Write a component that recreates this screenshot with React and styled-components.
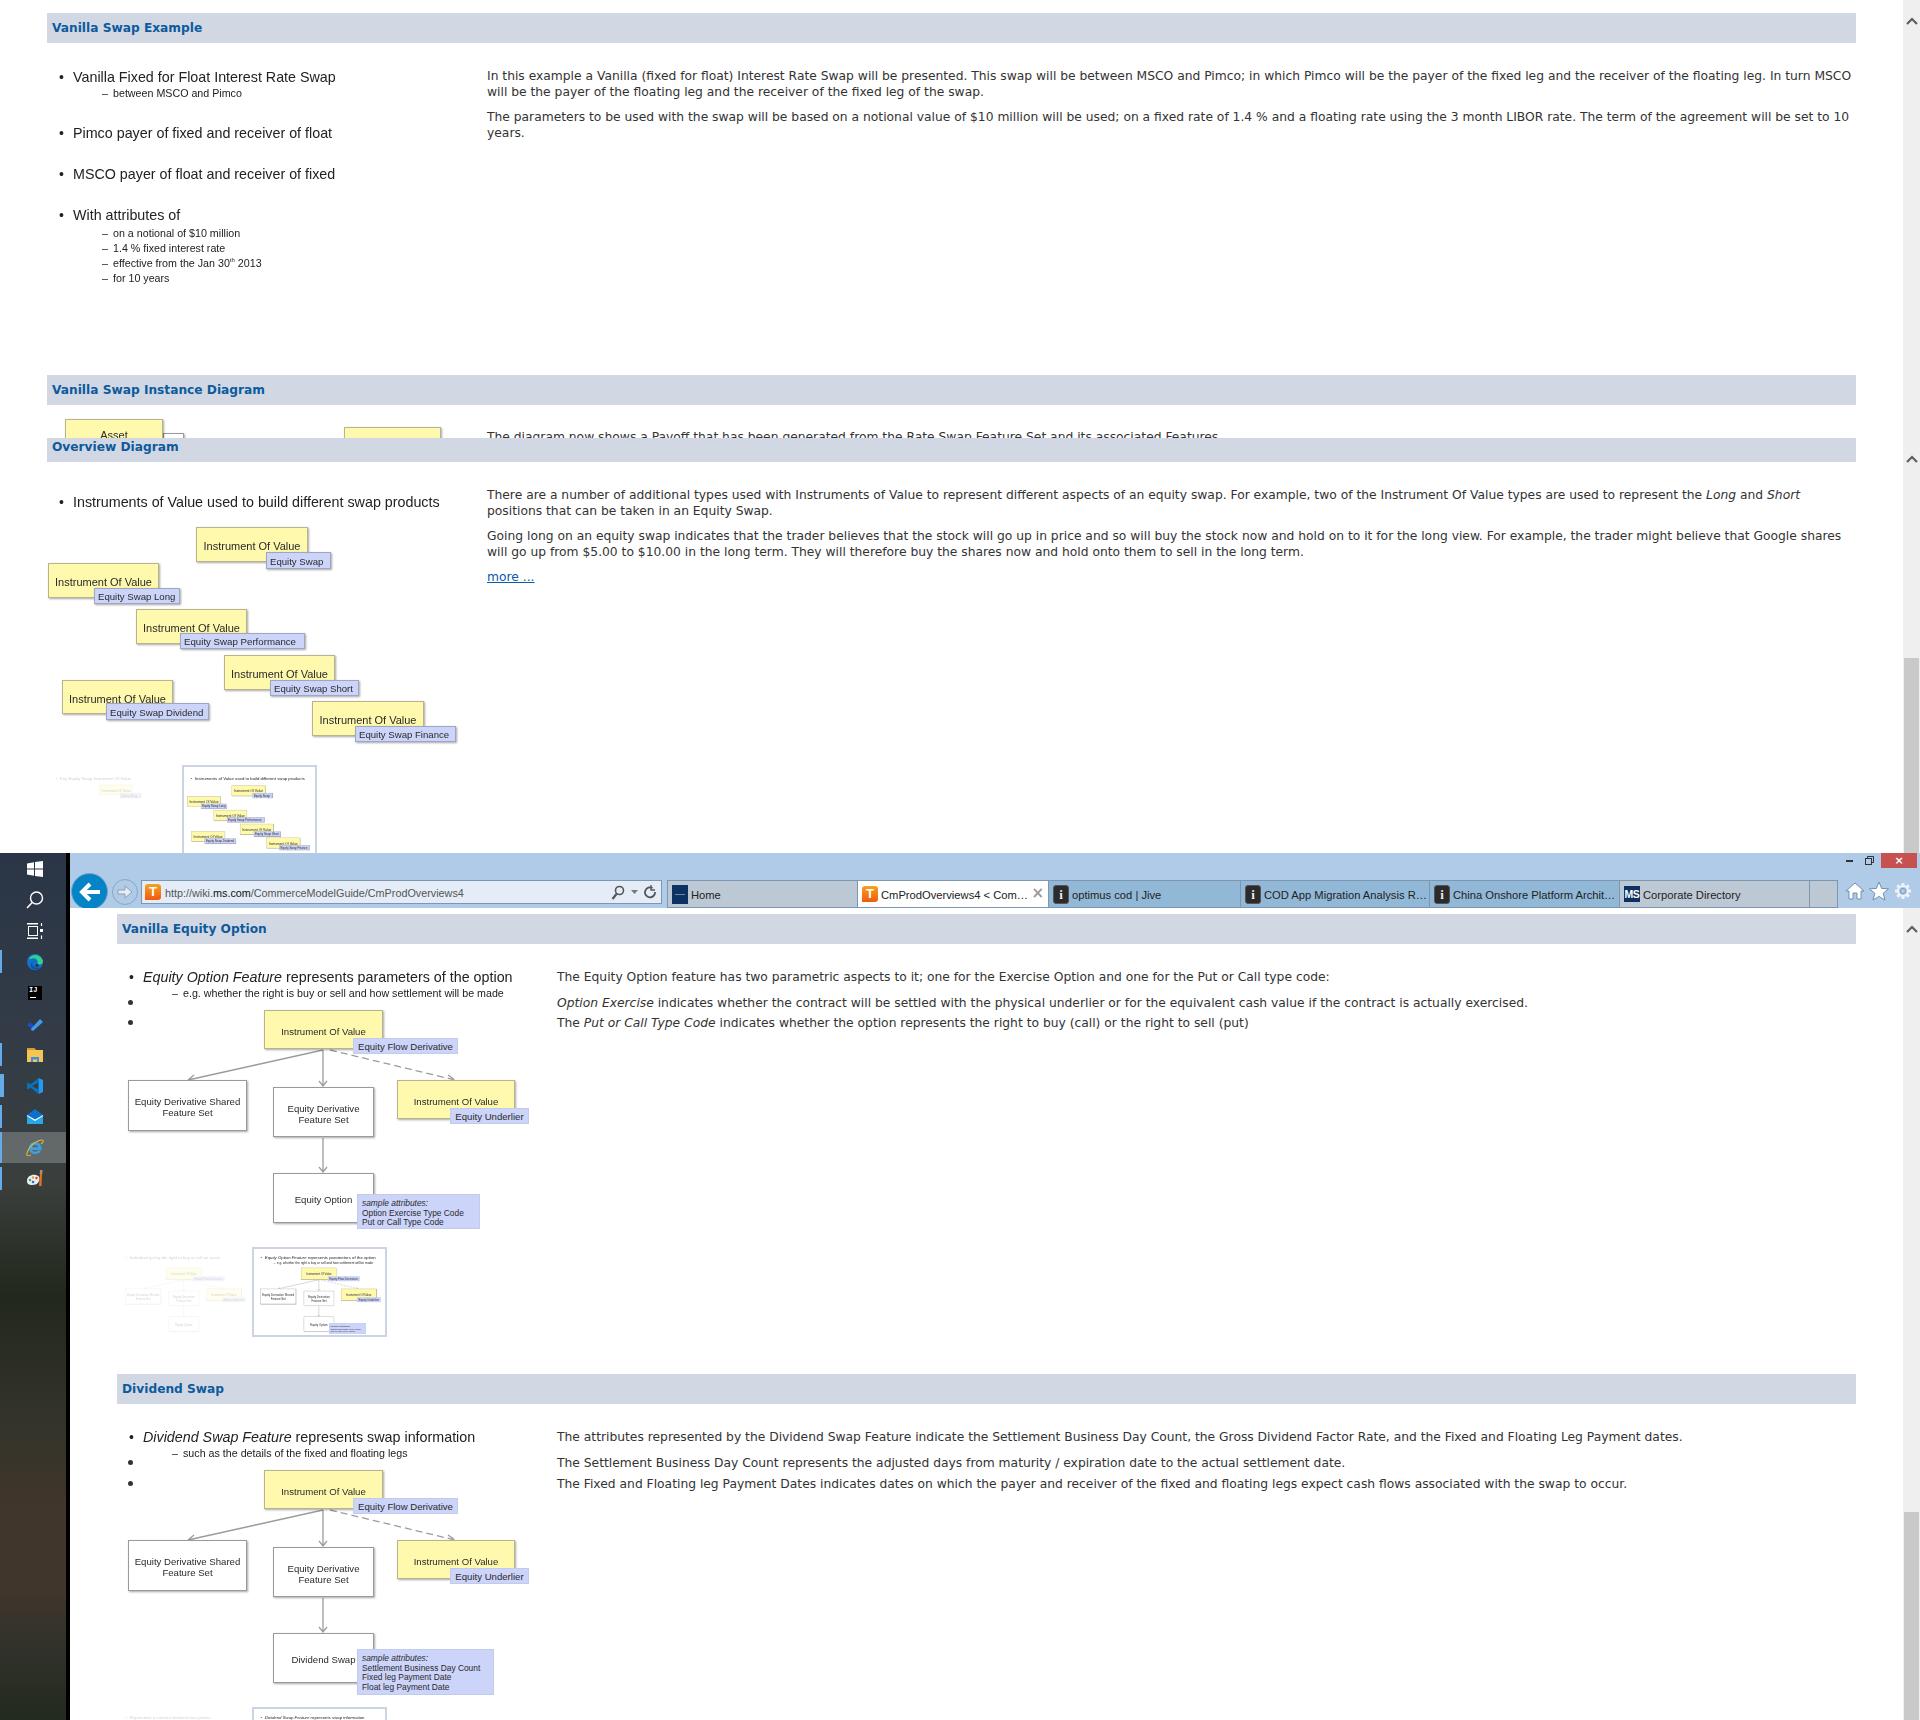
import React from "react";
import styled, { createGlobalStyle } from "styled-components";

const Global = createGlobalStyle`
  html, body { margin: 0; padding: 0; background: #fff; }
  * { box-sizing: border-box; }
`;

const Root = styled.div`
  width: 1920px;
  height: 1720px;
  display: flex;
  flex-direction: column;
  overflow: hidden;
  background: #fff;
`;
const Pane = styled.div`
  height: ${(p) => p.$h}px;
  display: flex;
  flex: none;
  overflow: hidden;
`;
const PaneBody = styled.div`
  flex: 1;
  min-width: 0;
  padding: ${(p) => p.$top || 0}px 47px 0;
  overflow: hidden;
`;
const ScrollTrack = styled.div`
  width: 17px;
  flex: none;
  display: flex;
  flex-direction: column;
  align-items: center;
  background: #efefef;
  padding-top: 17px;
  svg { flex: none; }
`;
const ScrollThumb = styled.div`
  margin-top: auto;
  width: 15px;
  height: ${(p) => p.$h}px;
  background: #c9c9c9;
`;
const SectionHeader = styled.h2`
  margin: 0;
  height: ${(p) => p.$h || 30}px;
  padding: 0 5px ${(p) => (p.$pb === undefined ? 1 : p.$pb)}px;
  display: flex;
  align-items: center;
  background: #d1d8e3;
  color: #0d5a9d;
  font: bold 12.2px "DejaVu Sans", Verdana, sans-serif;
`;
const SectionBody = styled.div`
  display: grid;
  grid-template-columns: 440px 1fr;
  height: ${(p) => p.$h}px;
  overflow: hidden;
`;
const SlideColumn = styled.div`
  display: flex;
  flex-direction: column;
  min-width: 0;
`;
const TextColumn = styled.div`
  padding-top: ${(p) => p.$top || 25}px;
  font: 12.3px/16px "DejaVu Sans", Verdana, sans-serif;
  color: #333;
`;
const Para = styled.p`
  margin: 0 0 ${(p) => (p.$gap === undefined ? 9 : p.$gap)}px;
`;
const MoreLink = styled.a`
  color: #0a5ca8;
  text-decoration: underline;
`;

/* slide */
const SlideCanvas = styled.div`
  position: relative;
  width: 440px;
  height: ${(p) => p.$h}px;
  padding-top: ${(p) => p.$top}px;
  flex: none;
  filter: blur(0.3px);
  font-family: "Liberation Sans", Arial, sans-serif;
  color: #222;
`;
const BulletList = styled.ul`
  margin: 0;
  padding: 0 0 0 26px;
  list-style: none;
`;
const Bullet = styled.li`
  position: relative;
  font-size: 14.3px;
  line-height: 18px;
  margin-top: ${(p) => p.$mt || 0}px;
  white-space: nowrap;
  &::before {
    content: "•";
    position: absolute;
    left: -14px;
    font-size: 14px;
  }
`;
const SubList = styled.ul`
  margin: 0;
  padding: 0 0 0 40px;
  list-style: none;
  margin-top: ${(p) => p.$mt || 0}px;
`;
const SubItem = styled.li`
  position: relative;
  font-size: 10.7px;
  line-height: 15px;
  white-space: nowrap;
  &::before {
    content: "–";
    position: absolute;
    left: -11px;
  }
  sup { font-size: 6px; line-height: 0; }
`;
const nodeBg = { yellow: "#fff9ad", white: "#fff", blue: "#ccd4fa", flat: "#ccd4fa" };
const nodeBorder = { yellow: "#b5b48c", white: "#9a9a9a", blue: "#9ea6c6", flat: "#c3cbea" };
const nodePadTop = { yellow: 4, white: 3, blue: 1, flat: 1 };
const Node = styled.div`
  position: absolute;
  left: ${(p) => p.$x}px;
  top: ${(p) => p.$y}px;
  width: ${(p) => p.$w}px;
  height: ${(p) => p.$h}px;
  display: flex;
  align-items: center;
  justify-content: ${(p) => (p.$kind === "blue" ? "flex-start" : "center")};
  text-align: center;
  padding-top: ${(p) => nodePadTop[p.$kind]}px;
  padding-left: ${(p) => (p.$kind === "blue" ? 3 : 0)}px;
  font-size: ${(p) => p.$fs || 9.6}px;
  line-height: 11px;
  white-space: nowrap;
  color: #2a2a2a;
  background: ${(p) => nodeBg[p.$kind]};
  border: 1px solid ${(p) => nodeBorder[p.$kind]};
  box-shadow: ${(p) => (p.$kind === "flat" ? "none" : "1px 1px 2px rgba(0, 0, 0, 0.35)")};
`;
const AttrNode = styled(Node)`
  display: block;
  text-align: left;
  padding: 4px 0 0 4px;
  line-height: 9.7px;
  font-size: 8.4px;
  em { display: block; }
`;
const Dot = styled.span`
  position: absolute;
  left: ${(p) => p.$x}px;
  top: ${(p) => p.$y}px;
  width: 5px;
  height: 5px;
  border-radius: 50%;
  background: #333;
`;
const Connectors = styled.svg`
  position: absolute;
  left: 0;
  top: 0;
  width: 440px;
  height: 300px;
  pointer-events: none;
`;
const ThumbRow = styled.div`
  display: flex;
  margin-top: ${(p) => p.$mt}px;
  flex: none;
`;
const ThumbFrame = styled.div`
  position: relative;
  width: 135px;
  height: 90px;
  overflow: hidden;
  flex: none;
  border: 2px solid ${(p) => (p.$active ? "#ccd3e2" : "transparent")};
  opacity: ${(p) => (p.$active ? 1 : 0.22)};
  background: #fff;
`;
const ThumbInner = styled.div`
  position: absolute;
  left: 3px;
  top: -1px;
  transform: scale(0.3);
  transform-origin: 0 0;
`;

/* taskbar */
const BottomRow = styled.div`
  flex: 1;
  display: flex;
  min-height: 0;
`;
const Taskbar = styled.div`
  width: 70px;
  flex: none;
  border-right: 4px solid #000;
  display: flex;
  flex-direction: column;
  background: linear-gradient(180deg, #2a3547 0%, #333c46 23%, #3a3f3d 38%, #22281b 51%, #33332a 65%, #41362b 76%, #40362c 85%, #30322a 92%, #232a1f 100%);
`;
const TaskItem = styled.div`
  height: 31px;
  display: flex;
  align-items: center;
  justify-content: center;
  position: relative;
  flex: none;
  padding-left: 4px;
  background: ${(p) => (p.$active ? "rgba(255,255,255,0.22)" : "transparent")};
  &::before {
    content: "";
    display: ${(p) => (p.$open ? "block" : "none")};
    position: absolute;
    left: 0;
    top: ${(p) => (p.$active ? 0 : 4)}px;
    bottom: ${(p) => (p.$active ? 0 : 4)}px;
    width: ${(p) => (p.$wide ? 4 : 2)}px;
    background: #63ace9;
  }
`;
const IJLogo = styled.div`
  width: 14px;
  height: 14px;
  background: #000;
  color: #fff;
  font: bold 7px/9px "Liberation Mono", monospace;
  padding-left: 1px;
  position: relative;
  &::after {
    content: "";
    position: absolute;
    left: 2px;
    bottom: 2px;
    width: 6px;
    height: 1px;
    background: #fff;
  }
`;

/* browser */
const Browser = styled.div`
  flex: 1;
  min-width: 0;
  display: flex;
  flex-direction: column;
`;
const Chrome = styled.div`
  height: 55px;
  flex: none;
  background: #afcbe7;
  overflow: hidden;
  display: flex;
  flex-direction: column;
`;
const TitleRow = styled.div`
  height: 27px;
  flex: none;
  display: flex;
  justify-content: flex-end;
  align-items: flex-start;
  padding-right: 3px;
`;
const WinBtn = styled.div`
  width: ${(p) => p.$w}px;
  height: 15px;
  margin-left: ${(p) => (p.$close ? 2 : 0)}px;
  display: flex;
  align-items: center;
  justify-content: center;
  background: ${(p) => (p.$close ? "#c75050" : "transparent")};
  color: #fff;
  font: bold 11px/1 "DejaVu Sans", sans-serif;
`;
const NavRow = styled.div`
  height: 28px;
  flex: none;
  display: flex;
  align-items: flex-start;
`;
const BackBtn = styled.div`
  width: 37px;
  height: 37px;
  margin: -7px 0 0 1px;
  border-radius: 50%;
  background: #0483c6;
  border: 1px solid #7aa4c8;
  flex: none;
  display: flex;
  align-items: center;
  justify-content: center;
`;
const ForwardBtn = styled.div`
  width: 26px;
  height: 26px;
  margin: -1px 3px 0 4px;
  border-radius: 50%;
  border: 1px solid #8ca6bf;
  flex: none;
  display: flex;
  align-items: center;
  justify-content: center;
`;
const AddressBar = styled.div`
  width: 521px;
  height: 24px;
  flex: none;
  display: flex;
  align-items: center;
  background: #e4edf7;
  border: 1px solid #7d97b0;
  padding: 0 4px 0 3px;
  font: 10.8px "Liberation Sans", Arial, sans-serif;
  color: #555;
  b { font-weight: 400; color: #111; }
`;
const AddrText = styled.span`
  flex: 1;
  margin-left: 4px;
  padding-top: 1px;
  white-space: nowrap;
`;
const AddrTools = styled.span`
  display: flex;
  align-items: center;
  gap: 6px;
  padding-right: 1px;
`;
const Tabs = styled.div`
  display: flex;
  height: 28px;
  margin-left: 5px;
  flex: none;
  border-top: 1px solid #7d97b0;
  border-bottom: 1px solid #7d97b0;
  border-left: 1px solid #7d97b0;
`;
const Tab = styled.div`
  width: ${(p) => p.$w}px;
  flex: none;
  display: flex;
  align-items: center;
  gap: 3px;
  padding: 0 1px 0 4px;
  background: ${(p) => (p.$state === "active" ? "#fff" : p.$state === "gray" ? "#bdc8d5" : "#92b8d7")};
  border-right: 1px solid #7d97b0;
  font: 11.2px "Liberation Sans", Arial, sans-serif;
  color: #222;
  white-space: nowrap;
  overflow: hidden;
`;
const TabLabel = styled.span`
  flex: 1;
  min-width: 0;
  padding-top: 1px;
  overflow: hidden;
  text-overflow: ellipsis;
`;
const TabClose = styled.span`
  color: #9a9a9a;
  font: bold 15px "DejaVu Sans", sans-serif;
  margin: -2px 3px 0 0;
`;
const TopicIcon = styled.span`
  width: 16px;
  height: 16px;
  flex: none;
  border-radius: 3px 3px 3px 0;
  background: linear-gradient(180deg, #f7a21c, #f05a10);
  color: #fff;
  font: bold 13px/16px "Liberation Sans", sans-serif;
  text-align: center;
`;
const JiveIcon = styled.span`
  width: 16px;
  height: 19px;
  flex: none;
  border-radius: 3px;
  background: #2b2b2b;
  border: 1px solid #555;
  color: #eee;
  font: bold 13px/17px "Liberation Serif", serif;
  text-align: center;
`;
const MSIcon = styled.span`
  width: 16px;
  height: 16px;
  flex: none;
  background: #0c3264;
  color: #fff;
  font: bold 10.5px/16px "Liberation Sans", sans-serif;
  text-align: center;
  letter-spacing: -0.4px;
`;
const HomeIcon = styled.span`
  width: 16px;
  height: 19px;
  flex: none;
  background: #0c3264;
  display: flex;
  align-items: center;
  justify-content: center;
  &::after {
    content: "";
    width: 10px;
    height: 1px;
    background: #6b86a8;
  }
`;
const Tools = styled.div`
  display: flex;
  align-items: center;
  margin-left: 7px;
  margin-top: 1px;
  gap: 4px;
`;
const View = styled.div`
  flex: 1;
  display: flex;
  min-height: 0;
`;

const overviewNodes = [
  { k: "yellow", x: 149, y: 65, w: 112, h: 35, fs: 11, t: "Instrument Of Value" },
  { k: "blue", x: 219, y: 90, w: 65, h: 17, fs: 9.6, t: "Equity Swap" },
  { k: "yellow", x: 1, y: 101, w: 111, h: 35, fs: 11, t: "Instrument Of Value" },
  { k: "blue", x: 47, y: 126, w: 86, h: 16, fs: 9.6, t: "Equity Swap Long" },
  { k: "yellow", x: 89, y: 147, w: 111, h: 35, fs: 11, t: "Instrument Of Value" },
  { k: "blue", x: 133, y: 171, w: 125, h: 16, fs: 9.7, t: "Equity Swap Performance" },
  { k: "yellow", x: 177, y: 193, w: 111, h: 35, fs: 11, t: "Instrument Of Value" },
  { k: "blue", x: 223, y: 218, w: 89, h: 16, fs: 9.6, t: "Equity Swap Short" },
  { k: "yellow", x: 15, y: 218, w: 111, h: 34, fs: 11, t: "Instrument Of Value" },
  { k: "blue", x: 59, y: 241, w: 103, h: 17, fs: 9.6, t: "Equity Swap Dividend" },
  { k: "yellow", x: 265, y: 239, w: 112, h: 35, fs: 11, t: "Instrument Of Value" },
  { k: "blue", x: 308, y: 264, w: 101, h: 16, fs: 9.6, t: "Equity Swap Finance" },
];

const featureNodes = (label) => [
  { k: "yellow", x: 147, y: 66, w: 119, h: 39, t: "Instrument Of Value" },
  { k: "white", x: 11, y: 136, w: 119, h: 51, t: <>Equity Derivative Shared<br />Feature Set</> },
  { k: "white", x: 156, y: 143, w: 101, h: 50, t: <>Equity Derivative<br />Feature Set</> },
  { k: "yellow", x: 280, y: 136, w: 118, h: 39, t: "Instrument Of Value" },
  { k: "white", x: 156, y: 229, w: 101, h: 50, t: label },
  { k: "flat", x: 236, y: 94, w: 105, h: 16, t: "Equity Flow Derivative" },
  { k: "flat", x: 333, y: 164, w: 79, h: 16, t: "Equity Underlier" },
];
const equityNodes = featureNodes("Equity Option");
const dividendNodes = featureNodes("Dividend Swap");

const Arrows = () => (
  <Connectors viewBox="0 0 440 300" fill="none" stroke="#9c9c9c" strokeWidth="1.3">
    <path d="M206 106 L71 136 M71 136 L77 131 M71 136 L78 137" />
    <path d="M206 106 V142 M202 137 L206 142 L210 137" />
    <path d="M213 106 L338 136 M331 131 L338 136 L331 138" strokeDasharray="7 4" />
    <path d="M206 194 V228 M202 223 L206 228 L210 223" />
  </Connectors>
);

function Slide({ top, height, children, nodes = [], arrows, dots, overlay }) {
  return (
    <SlideCanvas $top={top} $h={height}>
      {children}
      {arrows && <Arrows />}
      {nodes.map((n, i) => (
        <Node key={i} $kind={n.k} $x={n.x} $y={n.y} $w={n.w} $h={n.h} $fs={n.fs}>
          {n.t}
        </Node>
      ))}
      {overlay}
      {dots && dots.map((y) => <Dot key={y} $x={11} $y={y} />)}
    </SlideCanvas>
  );
}

const OverviewBullets = () => (
  <BulletList>
    <Bullet>Instruments of Value used to build different swap products</Bullet>
  </BulletList>
);

const OverviewThumbs = () => (
  <ThumbRow $mt={20}>
    <ThumbFrame>
      <ThumbInner>
        <Slide top={31} height={283} nodes={[
          { k: "yellow", x: 157, y: 63, w: 113, h: 33, fs: 11, t: "Instrument Of Value" },
          { k: "blue", x: 227, y: 90, w: 67, h: 15, fs: 9.6, t: "Equity Swap" },
        ]}>
          <BulletList><Bullet>Key Equity Swap Instrument Of Value</Bullet></BulletList>
        </Slide>
      </ThumbInner>
    </ThumbFrame>
    <ThumbFrame $active>
      <ThumbInner>
        <Slide top={31} height={283} nodes={overviewNodes}>
          <OverviewBullets />
        </Slide>
      </ThumbInner>
    </ThumbFrame>
  </ThumbRow>
);

const EquityBullets = () => (
  <BulletList>
    <Bullet><em>Equity Option Feature</em> represents parameters of the option</Bullet>
    <SubList><SubItem>e.g. whether the right is buy or sell and how settlement will be made</SubItem></SubList>
  </BulletList>
);
const DividendBullets = () => (
  <BulletList>
    <Bullet><em>Dividend Swap Feature</em> represents swap information</Bullet>
    <SubList><SubItem>such as the details of the fixed and floating legs</SubItem></SubList>
  </BulletList>
);

const EquityAttr = () => (
  <AttrNode $kind="flat" $x={240} $y={250} $w={123} $h={35}>
    <em>sample attributes:</em>Option Exercise Type Code<br />Put or Call Type Code
  </AttrNode>
);
const DividendAttr = () => (
  <AttrNode $kind="flat" $x={240} $y={245} $w={137} $h={46}>
    <em>sample attributes:</em>Settlement Business Day Count<br />Fixed leg Payment Date<br />Float leg Payment Date
  </AttrNode>
);

const FeatureThumbs = ({ fadedLine, children, nodes, attr }) => (
  <ThumbRow $mt={18}>
    <ThumbFrame>
      <ThumbInner>
        <Slide top={24} height={300} nodes={equityNodes} arrows>
          <BulletList><Bullet>{fadedLine}</Bullet></BulletList>
        </Slide>
      </ThumbInner>
    </ThumbFrame>
    <ThumbFrame $active>
      <ThumbInner>
        <Slide top={24} height={300} nodes={nodes} arrows overlay={attr}>
          {children}
        </Slide>
      </ThumbInner>
    </ThumbFrame>
  </ThumbRow>
);

const Chevron = () => (
  <svg width="12" height="8" viewBox="0 0 12 8" fill="none">
    <path d="M1 7 L6 2 L11 7" stroke="#5f5f5f" strokeWidth="2.2" />
  </svg>
);

const WinLogo = () => (
  <svg width="16" height="16" viewBox="0 0 16 16" fill="#fff">
    <path d="M0 2.4 L7 1.3 V7.5 H0Z M8 1.1 L16 0 V7.5 H8Z M0 8.5 H7 V14.7 L0 13.6Z M8 8.5 H16 V16 L8 14.9Z" />
  </svg>
);
const SearchTask = () => (
  <svg width="18" height="18" viewBox="0 0 18 18" fill="none" stroke="#fff">
    <circle cx="10.5" cy="7" r="6" strokeWidth="1.4" />
    <path d="M6.2 11.5 L1 17" strokeWidth="1.6" />
  </svg>
);
const TaskView = () => (
  <svg width="16" height="16" viewBox="0 0 16 16" fill="none" stroke="#fff" strokeWidth="1">
    <rect x="1.5" y="3.5" width="9" height="9" />
    <path d="M0 0.8 H11 M0 15.3 H11" strokeWidth="1.4" />
    <path d="M14.5 0 V3 M14.5 12.5 V16" strokeWidth="1.2" />
    <rect x="13" y="6" width="3" height="3" fill="#fff" stroke="none" />
  </svg>
);
const Edge = () => (
  <svg width="16" height="16" viewBox="0 0 16 16">
    <circle cx="8" cy="8" r="8" fill="#1173c9" />
    <path d="M2 5 C4 0 13 -1 16 7 C16 11 12 11 10.5 9.5 C12 6 8 3.5 5 4.5 C3.5 5 2.5 5.5 2 5Z" fill="#33d08a" />
    <path d="M9 7 C5 6 4.5 10 6 12 C8 14 11 14.5 14 13 C11 16 6 16 4 13 C3 10 5 7 9 7Z" fill="#0a4fa8" />
    <circle cx="10" cy="11.5" r="1.8" fill="#2a3a4a" />
  </svg>
);
const Todo = () => (
  <svg width="16" height="14" viewBox="0 0 16 14">
    <path d="M0 8 L3 5 L7 9 L5 12 Z" fill="#1b4fc4" />
    <path d="M3.5 12.5 L13 2 L16 5 L6 14 Z" fill="#3f9bec" />
  </svg>
);
const Folder = () => (
  <svg width="16" height="14" viewBox="0 0 16 14">
    <path d="M0 0 H7 L9 2 H16 V14 H0 Z" fill="#f4c552" />
    <path d="M0 0 H7 L9 2 H0 Z" fill="#d99c1e" />
    <path d="M4 9 H12 V14 H10 V11.5 H6 V14 H4 Z" fill="#3d8fe0" />
  </svg>
);
const VSCode = () => (
  <svg width="16" height="16" viewBox="0 0 16 16">
    <path d="M11.5 0 L16 2 V14 L11.5 16 Z" fill="#1f9cf0" />
    <path d="M11.5 0 V4.5 L5 8 L11.5 11.5 V16 L3.5 9.5 L1 11.5 L0 10.5 V5.5 L1 4.5 L3.5 6.5 Z" fill="#0a72bd" />
  </svg>
);
const Mail = () => (
  <svg width="16" height="15" viewBox="0 0 16 15">
    <path d="M0 6 L8 0 L16 6 V15 H0Z" fill="#0f6fc6" />
    <path d="M0 6 L8 11 L16 6 V15 H0Z" fill="#28a8ea" />
    <path d="M0 6 L8 10.5 L16 6 V7 L8 12 L0 7Z" fill="#fff" />
  </svg>
);
const IE = () => (
  <svg width="18" height="18" viewBox="0 0 18 18" fill="none">
    <path d="M9 3 C5 3 3 6 3 9 C3 13 6 15 9 15 C12 15 14 14 15 11.5 H12 C11 13 7 13.5 6 11 H15.5 C16 6 13 3 9 3Z M6 8.2 C6.5 5 11.5 5 12.3 8.2Z" fill="#3ba3e2" />
    <path d="M2 16.5 C-1 17 2 9 7 5 C11 2 16 0 17 1.5 C17.7 2.5 16.5 4 15 5" stroke="#e8b52a" strokeWidth="1.1" />
    <path d="M2 16.5 C2.5 17 4 16.5 5 16" stroke="#e8b52a" strokeWidth="1" />
  </svg>
);
const Paint = () => (
  <svg width="17" height="18" viewBox="0 0 17 18">
    <path d="M0 11 C0 6 5 4 9 5 C13 6 13 9 12 11 C11 14 8 15 5 15 C2 15 0 14 0 11Z" fill="#e8edf0" />
    <circle cx="3" cy="10" r="1.2" fill="#3aa84a" />
    <circle cx="6" cy="7.5" r="1.2" fill="#e2a020" />
    <circle cx="9.5" cy="8" r="1.2" fill="#d04040" />
    <circle cx="6" cy="12" r="1.3" fill="#3070c0" />
    <path d="M12 16 L13 4 H15 L14.5 16Z" fill="#e87020" />
    <path d="M12.7 4 L13 0 H15.5 L15.3 4Z" fill="#a89070" />
  </svg>
);
const BackArrow = () => (
  <svg width="22" height="20" viewBox="0 0 22 20" fill="none" stroke="#fff" strokeWidth="4">
    <path d="M21 10 H4 M11 2 L3 10 L11 18" />
  </svg>
);
const ForwardArrow = () => (
  <svg width="16" height="14" viewBox="0 0 16 14" fill="#e4edf7" stroke="#8c9fb2">
    <path d="M1 5 H8 V1 L15 7 L8 13 V9 H1Z" />
  </svg>
);
const Magnifier = () => (
  <svg width="14" height="15" viewBox="0 0 14 15" fill="none" stroke="#555">
    <circle cx="8.5" cy="5.5" r="4" strokeWidth="1.6" />
    <path d="M5.5 9 L1.5 14" strokeWidth="2.2" />
  </svg>
);
const Caret = () => (
  <svg width="7" height="4" viewBox="0 0 7 4" fill="#777"><path d="M0 0 H7 L3.5 4Z" /></svg>
);
const Refresh = () => (
  <svg width="12" height="14" viewBox="0 0 12 14" fill="none" stroke="#555" strokeWidth="1.8">
    <path d="M8.5 3 A5 5 0 1 0 11 7" />
    <path d="M7 0 V5 H11" strokeWidth="1.3" />
  </svg>
);
const HomeTool = () => (
  <svg width="20" height="20" viewBox="0 0 20 20" fill="#fff" stroke="#5b7c9e" strokeWidth="0.8">
    <path d="M10 2 L19 10 H16 V18 H12 V12 H8 V18 H4 V10 H1Z" />
  </svg>
);
const StarTool = () => (
  <svg width="20" height="20" viewBox="0 0 20 20" fill="#fff" stroke="#5b7c9e" strokeWidth="0.8">
    <path d="M10 1 L12.6 7.4 L19.5 7.9 L14.2 12.3 L15.9 19 L10 15.4 L4.1 19 L5.8 12.3 L0.5 7.9 L7.4 7.4Z" />
  </svg>
);
const GearTool = () => (
  <svg width="20" height="20" viewBox="0 0 20 20" fill="none">
    <path d="M10 2 V5 M10 15 V18 M2 10 H5 M15 10 H18 M4.3 4.3 L6.4 6.4 M13.6 13.6 L15.7 15.7 M15.7 4.3 L13.6 6.4 M6.4 13.6 L4.3 15.7" stroke="#eef3f8" strokeWidth="3" />
    <circle cx="10" cy="10" r="5" stroke="#eef3f8" strokeWidth="2" />
    <circle cx="10" cy="10" r="2.6" fill="#afcbe7" stroke="#6f8fae" strokeWidth="0.8" />
  </svg>
);
const MinIcon = () => <svg width="7" height="2" viewBox="0 0 7 2"><rect width="7" height="2" fill="#333" /></svg>;
const RestoreIcon = () => (
  <svg width="9" height="9" viewBox="0 0 9 9" fill="none" stroke="#333">
    <rect x="0.5" y="2.5" width="6" height="6" />
    <path d="M2.5 2 V0.5 H8.5 V6.5 H7" />
  </svg>
);

const tasks = [
  { i: <WinLogo /> },
  { i: <SearchTask /> },
  { i: <TaskView /> },
  { i: <Edge />, open: true },
  { i: <IJLogo>IJ</IJLogo> },
  { i: <Todo /> },
  { i: <Folder />, open: true },
  { i: <VSCode />, open: true, wide: true },
  { i: <Mail />, open: true },
  { i: <IE />, open: true, active: true },
  { i: <Paint />, open: true },
];

export default function App() {
  return (
    <Root>
      <Global />
      <Pane $h={438}>
        <PaneBody $top={13}>
          <SectionHeader>Vanilla Swap Example</SectionHeader>
          <SectionBody $h={332}>
            <SlideColumn>
              <SlideCanvas $top={25} $h={332}>
                <BulletList>
                  <Bullet>Vanilla Fixed for Float Interest Rate Swap</Bullet>
                  <SubList>
                    <SubItem>between MSCO and Pimco</SubItem>
                  </SubList>
                  <Bullet $mt={23}>Pimco payer of fixed and receiver of float</Bullet>
                  <Bullet $mt={23}>MSCO payer of float and receiver of fixed</Bullet>
                  <Bullet $mt={23}>With attributes of</Bullet>
                  <SubList $mt={2}>
                    <SubItem>on a notional of $10 million</SubItem>
                    <SubItem>1.4 % fixed interest rate</SubItem>
                    <SubItem>effective from the Jan 30<sup>th</sup> 2013</SubItem>
                    <SubItem>for 10 years</SubItem>
                  </SubList>
                </BulletList>
              </SlideCanvas>
            </SlideColumn>
            <TextColumn>
              <Para>In this example a Vanilla (fixed for float) Interest Rate Swap will be presented. This swap will be between MSCO and Pimco; in which Pimco will be the payer of the fixed leg and the receiver of the floating leg. In turn MSCO will be the payer of the floating leg and the receiver of the fixed leg of the swap.</Para>
              <Para>The parameters to be used with the swap will be based on a notional value of $10 million will be used; on a fixed rate of 1.4 % and a floating rate using the 3 month LIBOR rate. The term of the agreement will be set to 10 years.</Para>
            </TextColumn>
          </SectionBody>
          <SectionHeader>Vanilla Swap Instance Diagram</SectionHeader>
          <SectionBody $h={33}>
            <Slide top={0} height={33} nodes={[
              { k: "white", x: 116, y: 28, w: 21, h: 20, t: "" },
              { k: "yellow", x: 18, y: 14, w: 98, h: 28, fs: 11, t: "Asset" },
              { k: "yellow", x: 297, y: 22, w: 97, h: 30, fs: 11, t: "" },
            ]} />
            <TextColumn $top={24}>
              <Para>The diagram now shows a Payoff that has been generated from the Rate Swap Feature Set and its associated Features.</Para>
            </TextColumn>
          </SectionBody>
        </PaneBody>
        <ScrollTrack><Chevron /></ScrollTrack>
      </Pane>
      <Pane $h={415}>
        <PaneBody>
          <SectionHeader $h={24} $pb={6}>Overview Diagram</SectionHeader>
          <SectionBody $h={391}>
            <SlideColumn>
              <Slide top={31} height={283} nodes={overviewNodes}>
                <OverviewBullets />
              </Slide>
              <OverviewThumbs />
            </SlideColumn>
            <TextColumn>
              <Para>There are a number of additional types used with Instruments of Value to represent different aspects of an equity swap. For example, two of the Instrument Of Value types are used to represent the <em>Long</em> and <em>Short</em> positions that can be taken in an Equity Swap.</Para>
              <Para>Going long on an equity swap indicates that the trader believes that the stock will go up in price and so will buy the stock now and hold on to it for the long view. For example, the trader might believe that Google shares will go up from $5.00 to $10.00 in the long term. They will therefore buy the shares now and hold onto them to sell in the long term.</Para>
              <MoreLink href="#">more ...</MoreLink>
            </TextColumn>
          </SectionBody>
        </PaneBody>
        <ScrollTrack>
          <Chevron />
          <ScrollThumb $h={195} />
        </ScrollTrack>
      </Pane>
      <BottomRow>
        <Taskbar>
          {tasks.map((t, i) => (
            <TaskItem key={i} $open={t.open} $active={t.active} $wide={t.wide}>{t.i}</TaskItem>
          ))}
        </Taskbar>
        <Browser>
          <Chrome>
            <TitleRow>
              <WinBtn $w={20}><MinIcon /></WinBtn>
              <WinBtn $w={20}><RestoreIcon /></WinBtn>
              <WinBtn $w={36} $close>×</WinBtn>
            </TitleRow>
            <NavRow>
              <BackBtn><BackArrow /></BackBtn>
              <ForwardBtn><ForwardArrow /></ForwardBtn>
              <AddressBar>
                <TopicIcon>T</TopicIcon>
                <AddrText>http://wiki.<b>ms.com</b>/CommerceModelGuide/CmProdOverviews4</AddrText>
                <AddrTools><Magnifier /><Caret /><Refresh /></AddrTools>
              </AddressBar>
              <Tabs>
                <Tab $w={190} $state="gray"><HomeIcon /><TabLabel>Home</TabLabel></Tab>
                <Tab $w={191} $state="active"><TopicIcon>T</TopicIcon><TabLabel>CmProdOverviews4 &lt; CommerceModelGuide</TabLabel><TabClose>×</TabClose></Tab>
                <Tab $w={192}><JiveIcon>i</JiveIcon><TabLabel>optimus cod | Jive</TabLabel></Tab>
                <Tab $w={189}><JiveIcon>i</JiveIcon><TabLabel>COD App Migration Analysis Report</TabLabel></Tab>
                <Tab $w={190}><JiveIcon>i</JiveIcon><TabLabel>China Onshore Platform Architecture</TabLabel></Tab>
                <Tab $w={190} $state="gray"><MSIcon>MS</MSIcon><TabLabel>Corporate Directory</TabLabel></Tab>
                <Tab $w={28} $state="gray" />
              </Tabs>
              <Tools><HomeTool /><StarTool /><GearTool /></Tools>
            </NavRow>
          </Chrome>
          <View>
            <PaneBody $top={6}>
              <SectionHeader>Vanilla Equity Option</SectionHeader>
              <SectionBody $h={430}>
                <SlideColumn>
                  <Slide top={24} height={285} nodes={equityNodes} arrows dots={[56, 76]} overlay={<EquityAttr />}>
                    <EquityBullets />
                  </Slide>
                  <FeatureThumbs fadedLine="Individual giving the right to buy or sell an asset" nodes={equityNodes} attr={<EquityAttr />}>
                    <EquityBullets />
                  </FeatureThumbs>
                </SlideColumn>
                <TextColumn>
                  <Para $gap={10}>The Equity Option feature has two parametric aspects to it; one for the Exercise Option and one for the Put or Call type code:</Para>
                  <Para $gap={4}><em>Option Exercise</em> indicates whether the contract will be settled with the physical underlier or for the equivalent cash value if the contract is actually exercised.</Para>
                  <Para>The <em>Put or Call Type Code</em> indicates whether the option represents the right to buy (call) or the right to sell (put)</Para>
                </TextColumn>
              </SectionBody>
              <SectionHeader>Dividend Swap</SectionHeader>
              <SectionBody $h={316}>
                <SlideColumn>
                  <Slide top={24} height={285} nodes={dividendNodes} arrows dots={[56, 77]} overlay={<DividendAttr />}>
                    <DividendBullets />
                  </Slide>
                  <FeatureThumbs fadedLine="Represents a contract between two parties" nodes={dividendNodes} attr={<DividendAttr />}>
                    <DividendBullets />
                  </FeatureThumbs>
                </SlideColumn>
                <TextColumn>
                  <Para $gap={10}>The attributes represented by the Dividend Swap Feature indicate the Settlement Business Day Count, the Gross Dividend Factor Rate, and the Fixed and Floating Leg Payment dates.</Para>
                  <Para $gap={5}>The Settlement Business Day Count represents the adjusted days from maturity / expiration date to the actual settlement date.</Para>
                  <Para>The Fixed and Floating leg Payment Dates indicates dates on which the payer and receiver of the fixed and floating legs expect cash flows associated with the swap to occur.</Para>
                </TextColumn>
              </SectionBody>
            </PaneBody>
            <ScrollTrack>
              <Chevron />
              <ScrollThumb $h={208} />
            </ScrollTrack>
          </View>
        </Browser>
      </BottomRow>
    </Root>
  );
}
